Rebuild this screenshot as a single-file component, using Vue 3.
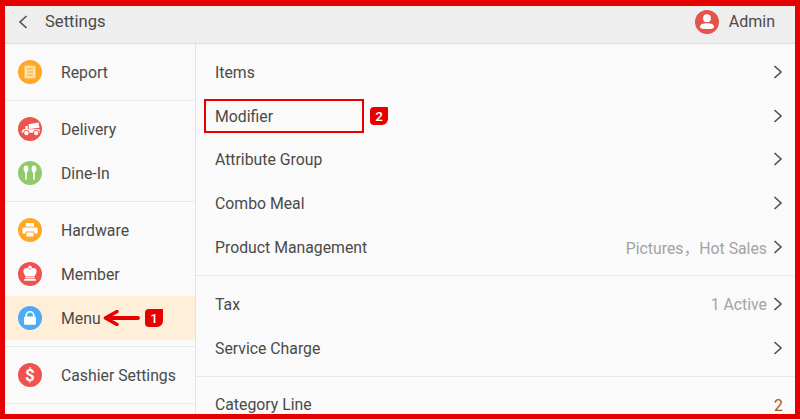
<script setup>
const sideGroups = [
  [{ label: "Report", color: "#ffa726", icon: "report" }],
  [
    { label: "Delivery", color: "#ef5350", icon: "delivery" },
    { label: "Dine-In", color: "#8fcb6b", icon: "dine" },
  ],
  [
    { label: "Hardware", color: "#ffa726", icon: "hardware" },
    { label: "Member", color: "#ef5350", icon: "member" },
    { label: "Menu", color: "#4dabf5", icon: "menu", active: true },
  ],
  [{ label: "Cashier Settings", color: "#ef5350", icon: "cashier" }],
];

const mainGroups = [
  [
    { label: "Items", arrow: true },
    { label: "Modifier", arrow: true },
    { label: "Attribute Group", arrow: true },
    { label: "Combo Meal", arrow: true },
    { label: "Product Management", value: "Pictures，Hot Sales", arrow: true },
  ],
  [
    { label: "Tax", value: "1 Active", arrow: true },
    { label: "Service Charge", arrow: true },
  ],
  [{ label: "Category Line", count: "2" }],
];
</script>

<template>
  <div class="frame">
    <header class="topbar">
      <svg class="back" viewBox="0 0 12 16" width="12" height="16">
        <path d="M9.5 2 L3 8 L9.5 14" fill="none" stroke="#555" stroke-width="1.7" />
      </svg>
      <span class="title">Settings</span>
      <svg class="avatar" viewBox="0 0 24 24" width="24" height="24">
        <circle cx="12" cy="12" r="12" fill="#e5534b" />
        <circle cx="12" cy="8.2" r="3.9" fill="#fff" />
        <path d="M5 17 C5 14 8 13.2 12 13.2 C16 13.2 19 14 19 17 C19 18.4 17 19 12 19 C7 19 5 18.4 5 17 Z" fill="#fff" />
      </svg>
      <span class="admin">Admin</span>
    </header>

    <div class="body">
      <aside class="sidebar">
        <section v-for="(group, g) in sideGroups" :key="g" class="group">
          <div v-for="item in group" :key="item.label" class="side-row" :class="{ active: item.active }">
            <span class="badge" :style="{ background: item.color }">
              <svg viewBox="0 0 24 24" width="24" height="24">
                <g v-if="item.icon === 'report'">
                  <rect x="6.5" y="5.5" width="11" height="13" rx="1.2" fill="#ffe0a8" />
                  <path d="M9 9h6M9 12h6M9 15h6" stroke="#ffa726" stroke-width="1.1" />
                </g>
                <g v-else-if="item.icon === 'delivery'" fill="#fff">
                  <path d="M10.5 7.2 20.6 5.6l.9 5.2-10.4 1.2z" />
                  <path d="M5.4 12.2h2V9h2.4v3.2h11.8v3.6H3.8v-2z" />
                  <circle cx="8.4" cy="16" r="3.1" fill="#ef5350" />
                  <circle cx="8.4" cy="16" r="2.2" />
                  <circle cx="18.2" cy="16" r="3.1" fill="#ef5350" />
                  <circle cx="18.2" cy="16" r="2.2" />
                </g>
                <g v-else-if="item.icon === 'dine'" fill="#fff">
                  <ellipse cx="8" cy="8" rx="2.4" ry="3.4" />
                  <rect x="7.2" y="9" width="1.6" height="10" rx=".8" />
                  <ellipse cx="16" cy="8" rx="2.4" ry="3.4" />
                  <rect x="15.2" y="9" width="1.6" height="10" rx=".8" />
                </g>
                <g v-else-if="item.icon === 'hardware'" fill="#fff">
                  <rect x="8" y="5" width="8" height="3.6" />
                  <rect x="4.5" y="9.6" width="15" height="6" rx="1.2" />
                  <rect x="8" y="14" width="8" height="5" stroke="#ffa726" stroke-width="1" />
                </g>
                <g v-else-if="item.icon === 'member'" fill="#fff">
                  <rect x="11.2" y="3.6" width="1.6" height="3.6" />
                  <rect x="10" y="4.6" width="4" height="1.4" />
                  <path d="M5.4 9.4a3.4 3.4 0 0 1 6.6-1.2 3.4 3.4 0 0 1 6.6 1.2c0 1.8-1.4 3.2-2.2 5.1H7.6c-.8-1.9-2.2-3.3-2.2-5.1z" />
                  <rect x="7.2" y="15.2" width="9.6" height="1.2" />
                  <rect x="6" y="17" width="12" height="1.8" rx=".4" />
                </g>
                <g v-else-if="item.icon === 'menu'" fill="#fff">
                  <path d="M8.2 11V9.6a3.8 3.8 0 0 1 7.6 0V11" fill="none" stroke="#fff" stroke-width="1.6" />
                  <rect x="6" y="10.6" width="12" height="8.2" rx="1.6" />
                </g>
                <text v-else x="12" y="18" text-anchor="middle" class="dollar">$</text>
              </svg>
            </span>
            <span class="side-label">{{ item.label }}</span>
          </div>
        </section>
      </aside>

      <main class="content">
        <section v-for="(group, g) in mainGroups" :key="g" class="group">
          <div v-for="row in group" :key="row.label" class="main-row">
            <span class="main-label">{{ row.label }}</span>
            <span v-if="row.value" class="value">{{ row.value }}</span>
            <span v-if="row.count" class="count">{{ row.count }}</span>
            <svg v-if="row.arrow" class="chevron" viewBox="0 0 10 16" width="10" height="16">
              <path d="M1.5 2 L8 8 L1.5 14" fill="none" stroke="#555" stroke-width="1.7" />
            </svg>
          </div>
        </section>
      </main>
    </div>

    <svg class="arrow" viewBox="0 0 38 16" width="38" height="16">
      <path d="M36 8H9" stroke="#e60000" stroke-width="3.8" stroke-linecap="round" />
      <path d="M15 1.6 L3.4 8 L15 14.4" fill="none" stroke="#e60000" stroke-width="3.4" stroke-linecap="round" stroke-linejoin="round" />
    </svg>
    <span class="step step-one">1</span>
    <div class="highlight"></div>
    <span class="step step-two">2</span>
  </div>
</template>

<style>
html,
body {
  margin: 0;
  overflow: hidden;
}
</style>

<style scoped>
.frame {
  position: relative;
  box-sizing: border-box;
  width: 800px;
  height: 419px;
  border: 5px solid #e60000;
  border-top-width: 6px;
  overflow: hidden;
  background: #fafafa;
  font-family: Roboto, "Noto Sans CJK SC", sans-serif;
  color: #4a4a4a;
  font-size: 15.8px;
}

.topbar {
  display: flex;
  align-items: center;
  box-sizing: border-box;
  height: 38px;
  padding: 0 20px 6px 12px;
  background: #eeeeee;
  border-bottom: 1px solid #dedede;
}

.title {
  margin-left: 16px;
  flex: 1;
  font-size: 16.6px;
}

.admin {
  margin-left: 10px;
  font-size: 16px;
}

.body {
  display: flex;
}

.sidebar {
  box-sizing: border-box;
  width: 191px;
  flex-shrink: 0;
  border-right: 1px solid #e4e4e4;
}

.content {
  flex: 1;
}

.group {
  padding: 6px 0;
  border-bottom: 1px solid #e8e8e8;
}

.side-row {
  display: flex;
  align-items: center;
  height: 44px;
  padding-left: 13px;
}

.side-row.active {
  background: #ffefd9;
}

.badge {
  display: flex;
  width: 24px;
  height: 24px;
  border-radius: 50%;
}

.dollar {
  fill: #fff;
  font-size: 17px;
  font-weight: 700;
}

.side-label {
  margin-left: 19px;
  padding-top: 1px;
}

.main-row {
  display: flex;
  align-items: center;
  height: 43.8px;
  padding: 0 12px 0 19px;
}

.main-label {
  flex: 1;
  padding-top: 1px;
}

.value {
  color: #a3a3a3;
  margin-right: 6px;
  padding-top: 1px;
}

.count {
  color: #a5561f;
  padding-top: 2px;
}

.arrow {
  position: absolute;
  left: 97px;
  top: 304px;
}

.step {
  position: absolute;
  width: 18px;
  height: 18px;
  border-radius: 4px 1px 6px 4px;
  background: #e60000;
  color: #fff;
  font-size: 13.5px;
  font-weight: 500;
  line-height: 18px;
  text-align: center;
}

.step-one {
  left: 140px;
  top: 303px;
}

.step-two {
  left: 365px;
  top: 101px;
}

.highlight {
  position: absolute;
  left: 199px;
  top: 93px;
  width: 156px;
  height: 30px;
  border: 2px solid #e60000;
}
</style>
